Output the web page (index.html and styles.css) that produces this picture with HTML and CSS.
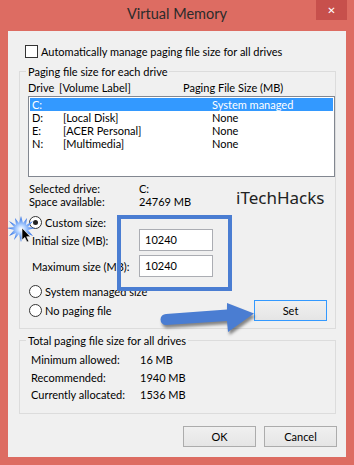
FILE: index.html
```html
<!DOCTYPE html>
<html lang="en">
<head>
<meta charset="utf-8">
<title>Virtual Memory</title>
<link rel="stylesheet" href="styles.css">
</head>
<body>
<div class="window">
  <div class="titlebar">
    <span class="spacer"></span>
    <span class="title">Virtual Memory</span>
    <span class="close-wrap"><span class="close">&#x2715;</span></span>
  </div>
  <div class="client">
    <div class="auto-row"><span class="checkbox"></span><span>Automatically manage paging file size for all drives</span></div>

    <fieldset class="group group-drives">
      <legend>Paging file size for each drive</legend>
      <div class="list-head"><span>Drive</span><span>[Volume Label]</span><span>Paging File Size (MB)</span></div>
      <div class="listbox">
        <div class="list-row selected"><span>C:</span><span></span><span>System managed</span></div>
        <div class="list-row"><span>D:</span><span>[Local Disk]</span><span>None</span></div>
        <div class="list-row"><span>E:</span><span>[ACER Personal]</span><span>None</span></div>
        <div class="list-row"><span>N:</span><span>[Multimedia]</span><span>None</span></div>
      </div>
      <div class="info">
        <span>Selected drive:</span><span>C:</span>
        <span>Space available:</span><span>24769 MB</span>
      </div>
      <div class="radio-row custom-row"><span class="radio checked"></span><span>Custom size:</span></div>
      <div class="field-row first"><span class="field-label">Initial size (MB):</span><span class="input">10240</span></div>
      <div class="field-row"><span class="field-label">Maximum size (MB):</span><span class="input">10240</span></div>
      <div class="radio-row sys-row"><span class="radio"></span><span>System managed size</span></div>
      <div class="last-row">
        <div class="radio-row"><span class="radio"></span><span>No paging file</span></div>
        <span class="btn btn-default">Set</span>
      </div>
    </fieldset>

    <fieldset class="group group-total">
      <legend>Total paging file size for all drives</legend>
      <div class="totals">
        <span>Minimum allowed:</span><span>16 MB</span>
        <span>Recommended:</span><span>1940 MB</span>
        <span>Currently allocated:</span><span>1536 MB</span>
      </div>
    </fieldset>

    <div class="buttons"><span class="btn">OK</span><span class="btn">Cancel</span></div>
  </div>

  <div class="watermark">iTechHacks</div>
  <div class="highlight-box"></div>
  <svg class="arrow" viewBox="155 298 105 40" width="105" height="40" aria-hidden="true">
    <defs>
      <filter id="blur" x="-20%" y="-40%" width="140%" height="180%"><feGaussianBlur stdDeviation="1.6"/></filter>
    </defs>
    <path d="M166,314 L227,309.5 L227,303 L254,313.5 L228,332 L227,321 L166,325 A5.5,5.5 0 0 1 166,314 Z" fill="rgba(0,0,0,0.45)" transform="translate(1.5,3)" filter="url(#blur)"/>
    <path d="M166,314 L227,309.5 L227,303 L254,313.5 L228,332 L227,321 L166,325 A5.5,5.5 0 0 1 166,314 Z" fill="#4a7dd2"/>
  </svg>
  <svg class="burst" viewBox="0 0 40 40" width="40" height="40" aria-hidden="true">
    <defs>
      <radialGradient id="bg" cx="50%" cy="50%" r="50%">
        <stop offset="0%" stop-color="#ffffff"/>
        <stop offset="35%" stop-color="#a9ccff"/>
        <stop offset="100%" stop-color="#1f63e0"/>
      </radialGradient>
    </defs>
    <polygon fill="url(#bg)" points="20,7 22,14 26,9 25,16 32,12 27,18 34,19 27,21 32,27 25,24 26,31 22,25 20,33 18,25 13,31 15,24 8,27 13,21 6,19 13,18 8,12 15,16 14,9 18,14"/>
    <path d="M21,19 L21,31 L23.8,28.4 L26,33 L27.8,32.2 L25.7,27.7 L29.4,27.7 Z" fill="#000" stroke="#fff" stroke-width="0.6"/>
  </svg>
</div>
</body>
</html>
```

FILE: styles.css
```css
html, body {
  margin: 0;
  padding: 0;
}
body {
  width: 354px;
  height: 465px;
  overflow: hidden;
  font-family: Lato, "Noto Sans", sans-serif;
  font-size: 11px;
  color: #000;
}
.window {
  position: relative;
  width: 354px;
  height: 465px;
  background: #dd6c62;
  display: flex;
  flex-direction: column;
}
.titlebar {
  height: 31px;
  display: grid;
  grid-template-columns: 1fr auto 1fr;
}
.title {
  font-size: 14.5px;
  line-height: 20px;
  padding-top: 4px;
  color: #2b2b2b;
}
.close-wrap {
  display: flex;
  justify-content: flex-end;
  padding-right: 7px;
}
.close {
  width: 31px;
  height: 20px;
  background: #c7504c;
  color: #fff;
  font-family: "DejaVu Sans", sans-serif;
  font-size: 10px;
  font-weight: bold;
  display: flex;
  align-items: center;
  justify-content: center;
}
.client {
  margin: 0 8px 8px;
  height: 426px;
  background: #f0f0f0;
  box-sizing: border-box;
  padding-top: 14px;
  display: flex;
  flex-direction: column;
}
.auto-row {
  display: flex;
  align-items: center;
  gap: 3px;
  margin-left: 17px;
  height: 13px;
  line-height: 13px;
}
.checkbox {
  width: 13px;
  height: 13px;
  box-sizing: border-box;
  border: 1px solid #333;
  background: #fff;
  flex: none;
}
.group {
  margin: 7px 10px 0 11px;
  padding: 0;
  border: 1px solid #dcdcdc;
  min-width: 0;
}
.group legend {
  margin-left: 6px;
  padding: 0 2px;
  line-height: 13px;
}
.list-head {
  display: grid;
  grid-template-columns: 31px 124px 1fr;
  padding-left: 8px;
  margin-top: 3px;
  line-height: 13px;
}
.listbox {
  margin: 2px 0 0 8px;
  height: 81px;
  box-sizing: border-box;
  border: 1px solid #828790;
  background: #fff;
  padding: 1px;
}
.list-row {
  display: grid;
  grid-template-columns: 31px 149px 1fr;
  padding-left: 2px;
  line-height: 13px;
  height: 13px;
}
.list-row.selected {
  background: #3399ff;
  color: #fff;
}
.info {
  display: grid;
  grid-template-columns: 110px 1fr;
  padding-left: 9px;
  margin-top: 4.5px;
  line-height: 13px;
}
.radio-row {
  display: flex;
  align-items: center;
  gap: 3px;
  height: 13px;
  line-height: 13px;
  padding-left: 9px;
}
.radio {
  width: 13px;
  height: 13px;
  box-sizing: border-box;
  border: 1px solid #333;
  border-radius: 50%;
  background: #fff;
  flex: none;
  display: flex;
  align-items: center;
  justify-content: center;
}
.radio.checked::after {
  content: "";
  width: 5px;
  height: 5px;
  border-radius: 50%;
  background: #222;
}
.custom-row {
  margin-top: 8.5px;
}
.field-row {
  display: flex;
  align-items: center;
  height: 22px;
  padding-left: 12px;
  margin-top: 4px;
}
.field-row.first {
  margin-top: 0;
}
.field-label {
  width: 107px;
  flex: none;
  white-space: nowrap;
}
.input {
  width: 74px;
  height: 22px;
  box-sizing: border-box;
  border: 1px solid #abadb3;
  background: #fff;
  padding-left: 5px;
  line-height: 20px;
}
.sys-row {
  margin-top: 7.5px;
}
.last-row {
  display: flex;
  align-items: center;
  justify-content: space-between;
  margin-top: 2.5px;
  padding-right: 8px;
  padding-bottom: 7px;
}
.last-row .radio-row {
  padding-left: 9px;
}
.btn {
  width: 73px;
  height: 21px;
  box-sizing: border-box;
  border: 1px solid #acacac;
  background: linear-gradient(#f0f0f0, #e5e5e5);
  display: flex;
  align-items: center;
  justify-content: center;
  line-height: 13px;
}
.btn-default {
  border-color: #3399ff;
}
.group-total {
  margin-top: 5px;
}
.totals {
  display: grid;
  grid-template-columns: 109px 1fr;
  padding: 4px 0 9px 11px;
  line-height: 17.5px;
  white-space: nowrap;
}
.buttons {
  display: flex;
  justify-content: flex-end;
  gap: 8px;
  margin-top: 12.5px;
  padding-right: 9px;
}
.watermark {
  position: absolute;
  left: 236px;
  top: 186px;
  font-family: "Noto Sans", sans-serif;
  font-size: 17px;
  line-height: 24px;
  color: #222;
}
.highlight-box {
  position: absolute;
  left: 117px;
  top: 215px;
  width: 115px;
  height: 76px;
  box-sizing: border-box;
  border: 4px solid #4a7dd2;
}
.arrow {
  position: absolute;
  left: 155px;
  top: 298px;
}
.burst {
  position: absolute;
  left: 1px;
  top: 209px;
}
```
